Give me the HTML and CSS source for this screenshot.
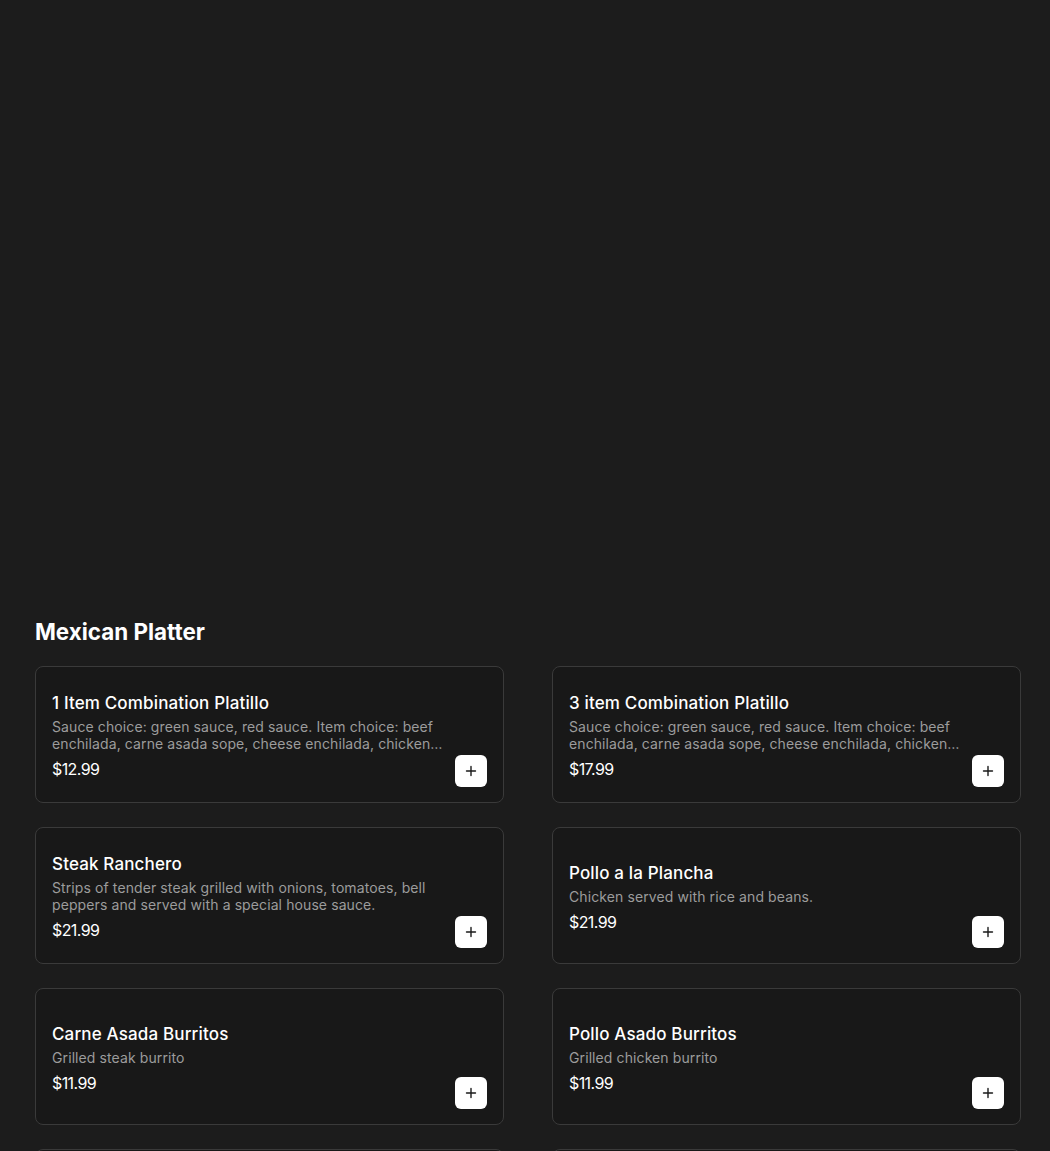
FILE: index.html
```html
<!DOCTYPE html>
<html lang="en">
<head>
<meta charset="utf-8">
<title>Mexican Platter</title>
<link rel="stylesheet" href="styles.css">
</head>
<body>
<main class="page">
  <div class="hero"></div>
  <section class="category">
    <h2 class="category-title">Mexican Platter</h2>
    <div class="grid">
      <article class="card">
        <div class="info">
          <h3 class="name">1 Item Combination Platillo</h3>
          <p class="desc">Sauce choice: green sauce, red sauce. Item choice: beef enchilada, carne asada sope, cheese enchilada, chicken enchilada, chicken sope, chile relleno.</p>
          <p class="price">$12.99</p>
        </div>
        <button class="add" aria-label="Add"><svg viewBox="0 0 12 12" width="12" height="12"><path d="M6 1.5v9M1.5 6h9" stroke="#1a1a1a" stroke-width="1.4" stroke-linecap="round"/></svg></button>
      </article>
      <article class="card">
        <div class="info">
          <h3 class="name">3 item Combination Platillo</h3>
          <p class="desc">Sauce choice: green sauce, red sauce. Item choice: beef enchilada, carne asada sope, cheese enchilada, chicken enchilada, chicken sope, chile relleno.</p>
          <p class="price">$17.99</p>
        </div>
        <button class="add" aria-label="Add"><svg viewBox="0 0 12 12" width="12" height="12"><path d="M6 1.5v9M1.5 6h9" stroke="#1a1a1a" stroke-width="1.4" stroke-linecap="round"/></svg></button>
      </article>
      <article class="card">
        <div class="info">
          <h3 class="name">Steak Ranchero</h3>
          <p class="desc">Strips of tender steak grilled with onions, tomatoes, bell peppers and served with a special house sauce.</p>
          <p class="price">$21.99</p>
        </div>
        <button class="add" aria-label="Add"><svg viewBox="0 0 12 12" width="12" height="12"><path d="M6 1.5v9M1.5 6h9" stroke="#1a1a1a" stroke-width="1.4" stroke-linecap="round"/></svg></button>
      </article>
      <article class="card">
        <div class="info">
          <h3 class="name">Pollo a la Plancha</h3>
          <p class="desc">Chicken served with rice and beans.</p>
          <p class="price">$21.99</p>
        </div>
        <button class="add" aria-label="Add"><svg viewBox="0 0 12 12" width="12" height="12"><path d="M6 1.5v9M1.5 6h9" stroke="#1a1a1a" stroke-width="1.4" stroke-linecap="round"/></svg></button>
      </article>
      <article class="card">
        <div class="info">
          <h3 class="name">Carne Asada Burritos</h3>
          <p class="desc">Grilled steak burrito</p>
          <p class="price">$11.99</p>
        </div>
        <button class="add" aria-label="Add"><svg viewBox="0 0 12 12" width="12" height="12"><path d="M6 1.5v9M1.5 6h9" stroke="#1a1a1a" stroke-width="1.4" stroke-linecap="round"/></svg></button>
      </article>
      <article class="card">
        <div class="info">
          <h3 class="name">Pollo Asado Burritos</h3>
          <p class="desc">Grilled chicken burrito</p>
          <p class="price">$11.99</p>
        </div>
        <button class="add" aria-label="Add"><svg viewBox="0 0 12 12" width="12" height="12"><path d="M6 1.5v9M1.5 6h9" stroke="#1a1a1a" stroke-width="1.4" stroke-linecap="round"/></svg></button>
      </article>
      <article class="card">
        <div class="info">
          <h3 class="name">Carnitas Burritos</h3>
          <p class="desc">Pork burrito</p>
          <p class="price">$11.99</p>
        </div>
        <button class="add" aria-label="Add"><svg viewBox="0 0 12 12" width="12" height="12"><path d="M6 1.5v9M1.5 6h9" stroke="#1a1a1a" stroke-width="1.4" stroke-linecap="round"/></svg></button>
      </article>
      <article class="card">
        <div class="info">
          <h3 class="name">Al Pastor Burritos</h3>
          <p class="desc">Marinated pork burrito</p>
          <p class="price">$11.99</p>
        </div>
        <button class="add" aria-label="Add"><svg viewBox="0 0 12 12" width="12" height="12"><path d="M6 1.5v9M1.5 6h9" stroke="#1a1a1a" stroke-width="1.4" stroke-linecap="round"/></svg></button>
      </article>
    </div>
  </section>
</main>
</body>
</html>
```
FILE: styles.css
```css
html, body {
  margin: 0;
  padding: 0;
  background: #1c1c1c;
}

body {
  font-family: "Inter", "Noto Sans", sans-serif;
  color: #ffffff;
}

.page {
  padding: 0 29px 0 35px;
}

.hero {
  height: 616px;
}

.category-title {
  margin: 0 0 18px 0;
  font-family: "Inter", "Roboto", sans-serif;
  font-weight: 700;
  font-size: 22.4px;
  line-height: 32px;
  color: #ffffff;
}

.grid {
  display: grid;
  grid-template-columns: 469px 469px;
  column-gap: 48px;
  row-gap: 24px;
}

.card {
  box-sizing: border-box;
  height: 137px;
  display: flex;
  align-items: center;
  gap: 6px;
  padding: 0 16px 15px 16px;
  background: #181818;
  border: 1px solid #3a3a3a;
  border-radius: 8px;
}

.info {
  flex: 1;
  min-width: 0;
  display: flex;
  flex-direction: column;
  padding-top: 18px;
}

.name {
  margin: 0;
  font-size: 17px;
  line-height: 20px;
  font-weight: 500;
  letter-spacing: 0.15px;
  color: #ffffff;
}

.desc {
  margin: 5px 0 0 0;
  font-size: 14px;
  line-height: 17px;
  letter-spacing: 0.1px;
  color: #9c9c9c;
  display: -webkit-box;
  -webkit-line-clamp: 2;
  -webkit-box-orient: vertical;
  overflow: hidden;
}

.price {
  margin: 7px 0 0 0;
  font-size: 16px;
  line-height: 20px;
  letter-spacing: -0.6px;
  color: #ffffff;
}

.add {
  align-self: flex-end;
  flex: none;
  width: 32px;
  height: 32px;
  padding: 0;
  border: none;
  border-radius: 6px;
  background: #ffffff;
  display: flex;
  align-items: center;
  justify-content: center;
  cursor: pointer;
}
```
